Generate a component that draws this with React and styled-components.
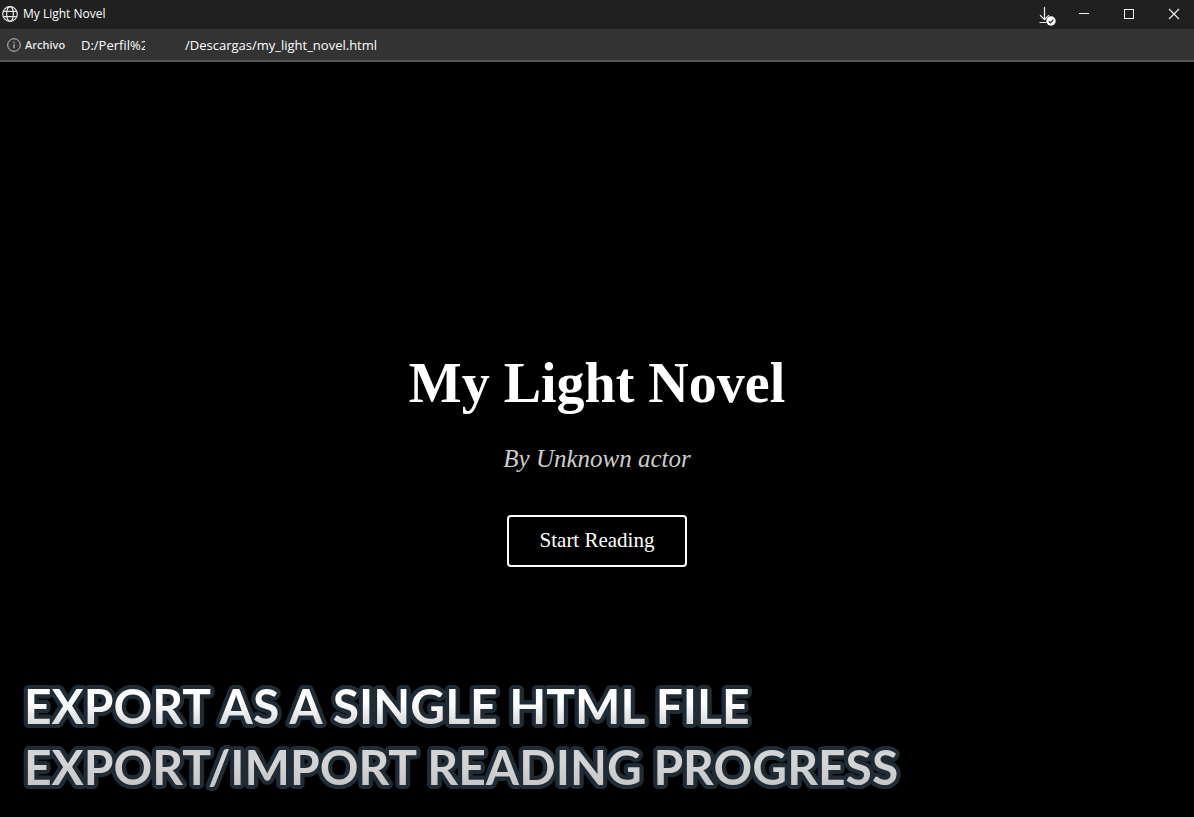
import React from 'react'
import styled, { createGlobalStyle } from 'styled-components'

const captions = [
  { text: 'EXPORT AS A SINGLE HTML FILE', from: '#ffffff', to: '#dadada' },
  { text: 'EXPORT/IMPORT READING PROGRESS', from: '#d4d4d4', to: '#c6c6c6' },
]

const GlobeIcon = () => (
  <svg width="16" height="16" viewBox="0 0 16 16" fill="none" stroke="#e6e6e6" strokeWidth="1.2" aria-hidden="true">
    <circle cx="8" cy="8" r="7.3" />
    <ellipse cx="8" cy="8" rx="3.4" ry="7.3" />
    <path d="M1.2 5.4h13.6M1.2 10.6h13.6" />
  </svg>
)

const InfoIcon = () => (
  <svg width="14" height="14" viewBox="0 0 14 14" fill="none" stroke="#c4c4c4" aria-hidden="true">
    <circle cx="7" cy="7" r="6.3" />
    <path d="M7 6.2v4M7 3.8v1.2" strokeWidth="1.2" />
  </svg>
)

const DownloadIcon = () => (
  <svg width="18" height="20" viewBox="0 0 18 20" fill="none" stroke="#f0f0f0" aria-hidden="true">
    <path d="M6.5 1v12.5M2 9.2l4.5 4.5L11 9.2M1.5 16.5h7" strokeWidth="1.2" />
    <circle cx="13" cy="15" r="4.7" fill="#fff" stroke="none" />
    <path d="M10.8 15.2l1.6 1.6 3-3.2" stroke="#222" strokeWidth="1.2" />
  </svg>
)

const MinimizeIcon = () => (
  <svg width="12" height="12" viewBox="0 0 12 12" stroke="#f0f0f0" aria-hidden="true">
    <path d="M1 5.5h10" />
  </svg>
)

const MaximizeIcon = () => (
  <svg width="12" height="12" viewBox="0 0 12 12" fill="none" stroke="#f0f0f0" aria-hidden="true">
    <rect x="1.5" y="1.5" width="9" height="9" />
  </svg>
)

const CloseIcon = () => (
  <svg width="12" height="12" viewBox="0 0 12 12" fill="none" stroke="#f0f0f0" aria-hidden="true">
    <path d="M1 1l10 10M11 1L1 11" strokeWidth="1.1" />
  </svg>
)

export const App = () => {
  return (
    <>
      <GlobalStyle />
      <Window>
        <TitleBar>
          <GlobeIcon />
          <WindowTitle>My Light Novel</WindowTitle>
          <DownloadButton type="button" aria-label="Downloads"><DownloadIcon /></DownloadButton>
          <WindowButton type="button" aria-label="Minimize"><MinimizeIcon /></WindowButton>
          <WindowButton type="button" aria-label="Maximize"><MaximizeIcon /></WindowButton>
          <WindowButton type="button" aria-label="Close"><CloseIcon /></WindowButton>
        </TitleBar>
        <AddressBar>
          <InfoIcon />
          <Scheme>Archivo</Scheme>
          <Address>
            <PathStart>D:/Perfil%2</PathStart>
            <span>/Descargas/my_light_novel.html</span>
          </Address>
        </AddressBar>
        <Page>
          <Cover>
            <Title>My Light Novel</Title>
            <Author>By Unknown actor</Author>
            <StartButton type="button">Start Reading</StartButton>
          </Cover>
          <Captions>
            {captions.map((c) => (
              <Caption key={c.text} data-text={c.text}>
                <CaptionFill $from={c.from} $to={c.to}>{c.text}</CaptionFill>
              </Caption>
            ))}
          </Captions>
        </Page>
      </Window>
    </>
  )
}
export default App

/* ring of hard shadows, gives the captions a round-cornered outline */
const outline = (radius, color) =>
  Array.from({ length: 24 }, (_, i) => {
    const a = (i / 24) * Math.PI * 2
    return `${(Math.cos(a) * radius).toFixed(2)}px ${(Math.sin(a) * radius).toFixed(2)}px 0 ${color}`
  }).join(', ')

const GlobalStyle = createGlobalStyle`
* {
  box-sizing: border-box;
}
body {
  margin: 0;
  background: #000;
}
`

const Window = styled.div`
display: flex;
flex-direction: column;
min-height: 100vh;
color: #fff;
background: #000;
font-family: "Open Sans", "Noto Sans", sans-serif;
`

const TitleBar = styled.header`
display: flex;
align-items: center;
height: 29px;
padding: 0 0 2px 2px;
background: #202020;
`

const WindowTitle = styled.span`
flex: 1;
margin-left: 5px;
font-size: 12px;
line-height: 17px;
`

const WindowButton = styled.button`
display: flex;
align-items: center;
justify-content: center;
width: 45px;
height: 27px;
padding: 0 0 0 5px;
border: 0;
background: transparent;
`

const DownloadButton = styled(WindowButton)`
width: 24px;
padding: 4px 0 0;
`

const AddressBar = styled.div`
display: flex;
align-items: center;
height: 33px;
padding: 0 7px;
background: #333;
border-bottom: 2px solid #555;
`

const Scheme = styled.span`
width: 56px;
margin-left: 4px;
font-size: 11px;
font-weight: 600;
line-height: 18px;
color: #e6e6e6;
`

const Address = styled.div`
display: flex;
gap: 40px;
font-size: 13px;
line-height: 18px;
white-space: nowrap;
`

const PathStart = styled.span`
width: 64px;
overflow: hidden;
`

const Page = styled.main`
display: flex;
flex: 1;
flex-direction: column;
`

const Cover = styled.section`
display: flex;
flex: 1;
flex-direction: column;
align-items: center;
justify-content: flex-end;
padding-bottom: 108px;
font-family: "Liberation Serif", serif;
`

const Title = styled.h1`
margin: 0;
font-size: 56px;
font-weight: 700;
line-height: 68px;
`

const Author = styled.p`
margin: 26px 0 40px;
font-size: 25px;
font-style: italic;
line-height: 32px;
color: #ccc;
`

const StartButton = styled.button`
padding: 11px 31px 13px;
border: 2px solid #fff;
border-radius: 4px;
background: transparent;
color: #fff;
font-family: inherit;
font-size: 21px;
line-height: 24px;
cursor: pointer;

&:hover {
  background: #fff;
  color: #000;
}
`

const Captions = styled.div`
padding: 0 24px 20px;
font-family: Lato, sans-serif;
font-size: 48px;
font-weight: 700;
line-height: 61px;
white-space: nowrap;
`

const Caption = styled.div`
display: grid;
justify-content: start;

&::before {
  content: attr(data-text);
  grid-area: 1 / 1;
  color: #202c35;
  text-shadow: ${outline(4, '#202c35')};
}
`

const CaptionFill = styled.span`
grid-area: 1 / 1;
background: linear-gradient(${(p) => p.$from} 45%, ${(p) => p.$to} 80%);
-webkit-background-clip: text;
background-clip: text;
color: transparent;
`
